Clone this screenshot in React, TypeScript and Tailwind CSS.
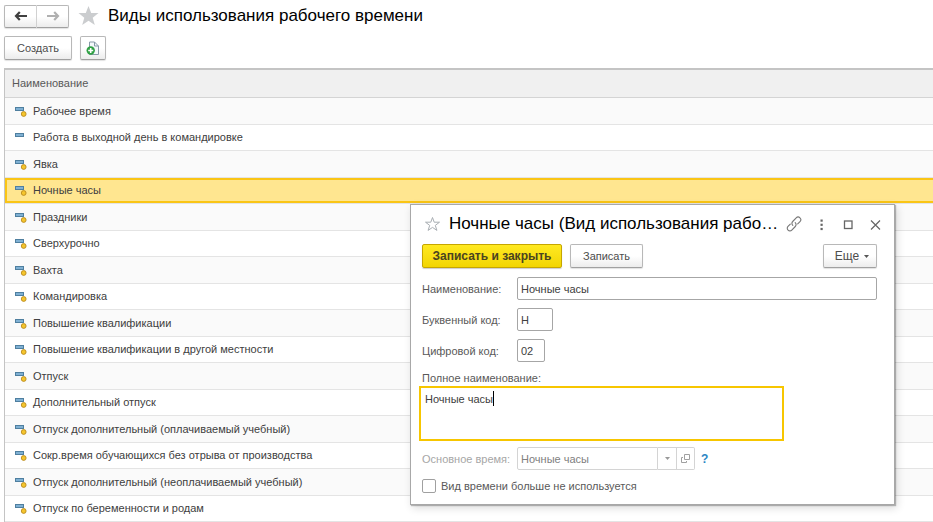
import { useState } from 'react'
import clsx from 'clsx'

const ROWS = [
  { name: 'Рабочее время', predefined: true },
  { name: 'Работа в выходной день в командировке', predefined: false },
  { name: 'Явка', predefined: true },
  { name: 'Ночные часы', predefined: true },
  { name: 'Праздники', predefined: true },
  { name: 'Сверхурочно', predefined: true },
  { name: 'Вахта', predefined: true },
  { name: 'Командировка', predefined: true },
  { name: 'Повышение квалификации', predefined: true },
  { name: 'Повышение квалификации в другой местности', predefined: true },
  { name: 'Отпуск', predefined: true },
  { name: 'Дополнительный отпуск', predefined: true },
  { name: 'Отпуск дополнительный (оплачиваемый учебный)', predefined: true },
  { name: 'Сокр.время обучающихся без отрыва от производства', predefined: true },
  { name: 'Отпуск дополнительный (неоплачиваемый учебный)', predefined: true },
  { name: 'Отпуск по беременности и родам', predefined: true },
]

const BTN = 'flex items-center justify-center rounded-xs border border-[#b8b8b8] border-b-[#a0a0a0] bg-linear-to-b from-white from-50% to-[#ececec] text-[#4d4d4d] shadow-[0_1px_1px_rgba(0,0,0,0.12)]'
const INPUT = 'h-[23px] rounded-xs border border-[#a6a6a6] bg-white px-[3px] text-[#404040] outline-none'
const LABEL = 'w-[95px] shrink-0 whitespace-nowrap'

function ItemIcon({ predefined }: { predefined: boolean }) {
  return (
    <svg width="13" height="12" viewBox="0 0 13 12" className="shrink-0" aria-hidden="true">
      <rect x="0.5" y="2.5" width="8" height="3" fill="#7fb0d3" stroke="#4f7f9f" />
      {predefined && <circle cx="8.7" cy="9" r="2.4" fill="#f5c52c" stroke="#b98a1c" strokeWidth="0.9" />}
    </svg>
  )
}

function Arrow({ flip, color }: { flip?: boolean; color: string }) {
  return (
    <svg width="14" height="12" viewBox="0 0 14 12" className={clsx(flip && '-scale-x-100')} aria-hidden="true">
      <path d="M3 6h10" stroke={color} strokeWidth="2" />
      <path d="M5.800 2L2 6l3.800 4" fill="none" stroke={color} strokeWidth="2.200" />
    </svg>
  )
}

function Dialog() {
  const [name, setName] = useState('Ночные часы')
  const [letter, setLetter] = useState('Н')
  const [digit, setDigit] = useState('02')
  const [full, setFull] = useState('Ночные часы')
  const [unused, setUnused] = useState(false)

  return (
    <section role="dialog" aria-labelledby="dlg-title" className="absolute top-[204px] left-[410px] w-[485px] border border-[#a8a8a8] bg-white pr-[17px] pb-[11px] pl-[11px] text-[#595959] shadow-[1px_1px_1px_rgba(0,0,0,0.25),2px_3px_8px_rgba(0,0,0,0.15)]">
      {/* Title bar */}
      <header className="flex h-[38px] items-center">
        <button aria-label="В избранное" className="ml-[2px]">
          <svg width="17" height="16" viewBox="0 0 17 16" fill="none" stroke="#a9aeb3" aria-hidden="true">
            <path d="M8.500 1.500l1.700 4.700h5.300l-4.200 3.200 1.600 5-4.400-3-4.400 3 1.600-5L1.500 6.200h5.300z" />
          </svg>
        </button>
        <h2 id="dlg-title" className="ml-2 min-w-0 flex-1 text-[17px] leading-6 whitespace-nowrap text-black">Ночные часы (Вид использования рабо…</h2>
        <div className="flex items-center gap-3">
          <button aria-label="Получить ссылку">
            <svg width="16" height="16" viewBox="0 0 16 16" fill="none" stroke="#777" strokeWidth="1.1" strokeLinecap="round" aria-hidden="true">
              <path d="M6.800 9.300a2.600 2.600 0 0 1-.1-3.800l3.500-3.600a2.600 2.600 0 0 1 3.800 3.700l-2.300 2.300" />
              <path d="M9.200 6.700a2.600 2.600 0 0 1 .1 3.800l-3.500 3.600A2.600 2.600 0 0 1 2 10.400l2.300-2.300" />
            </svg>
          </button>
          <button aria-label="Ещё действия">
            <svg width="15" height="15" viewBox="0 0 15 15" fill="#666" aria-hidden="true">
              <rect x="6.500" y="2.500" width="2.200" height="2.200" /><rect x="6.500" y="6.700" width="2.200" height="2.200" /><rect x="6.500" y="10.900" width="2.200" height="2.200" />
            </svg>
          </button>
          <button aria-label="Развернуть">
            <svg width="15" height="15" viewBox="0 0 15 15" fill="none" stroke="#666" strokeWidth="1.300" aria-hidden="true">
              <rect x="3.500" y="4" width="7.500" height="7.500" />
            </svg>
          </button>
          <button aria-label="Закрыть" className="-mr-[6px]">
            <svg width="15" height="15" viewBox="0 0 15 15" fill="none" stroke="#666" strokeWidth="1.200" aria-hidden="true">
              <path d="M3 3.500l9 9M12 3.500l-9 9" />
            </svg>
          </button>
        </div>
      </header>

      {/* Commands */}
      <div className="mt-px flex gap-2">
        <button className="h-6 w-[140px] rounded-xs border border-[#c6a600] bg-linear-to-b from-[#ffe920] to-[#f2d500] text-[12px] font-bold text-[#4a4420] shadow-[0_1px_1px_rgba(0,0,0,0.2)]">Записать и закрыть</button>
        <button className={clsx(BTN, 'h-6 w-[73px]')}>Записать</button>
        <button className={clsx(BTN, 'ml-auto h-6 w-[54px] gap-[5px] pl-1 text-[12px]')}>
          Еще
          <svg width="5" height="3" viewBox="0 0 5 3" fill="#555" aria-hidden="true"><path d="M0 0h5L2.500 3z" /></svg>
        </button>
      </div>

      {/* Fields */}
      <div className="mt-[9px] flex flex-col gap-2">
        <div className="flex items-center">
          <label htmlFor="name" className={LABEL}>Наименование:</label>
          <input id="name" value={name} onChange={e => setName(e.target.value)} className={clsx(INPUT, 'min-w-0 flex-1')} />
        </div>
        <div className="flex items-center">
          <label htmlFor="letter" className={LABEL}>Буквенный код:</label>
          <input id="letter" value={letter} onChange={e => setLetter(e.target.value)} className={clsx(INPUT, 'w-9')} />
        </div>
        <div className="flex items-center">
          <label htmlFor="digit" className={LABEL}>Цифровой код:</label>
          <input id="digit" value={digit} onChange={e => setDigit(e.target.value)} className={clsx(INPUT, 'w-7')} />
        </div>
      </div>
      <label htmlFor="full" className="mt-2 block leading-4">Полное наименование:</label>
      <div className="relative -ml-[3px] w-[365px]">
        <textarea id="full" value={full} onChange={e => setFull(e.target.value)} className="block h-[55px] w-full resize-none border-2 border-[#f7c600] bg-white px-1 py-[3px] leading-4 text-[#404040] caret-transparent outline-none" />
        {/* steady caret after the text */}
        <span aria-hidden="true" className="pointer-events-none absolute top-[5px] left-[6px] flex h-[15px] border-r border-black">
          <span className="invisible">{full}</span>
        </span>
      </div>
      <div className="mt-[6px] flex items-center">
        <label htmlFor="base" className={clsx(LABEL, 'text-[#a6a6a6]')}>Основное время:</label>
        <input id="base" value="Ночные часы" disabled className="h-[23px] w-[141px] rounded-l-xs border border-[#d4d4d4] px-[3px] text-[#808080]" />
        <button disabled aria-label="Выбрать из списка" className="flex h-[23px] w-[19px] items-center justify-center border-y border-r border-[#d4d4d4]">
          <svg width="5" height="3" viewBox="0 0 5 3" fill="#999" aria-hidden="true"><path d="M0 0h5L2.500 3z" /></svg>
        </button>
        <button disabled aria-label="Открыть" className="flex h-[23px] w-[18px] items-center justify-center rounded-r-xs border-y border-r border-[#d4d4d4]">
          <svg width="9" height="9" viewBox="0 0 9 9" fill="none" stroke="#a0a0a0" aria-hidden="true">
            <path d="M3.500 .5h5v5h-5zM2 3.500H.5v5h5V7" />
          </svg>
        </button>
        <button aria-label="Справка" className="ml-[6px] text-[12px] font-bold text-[#2d86c4]">?</button>
      </div>
      <label className="mt-[9px] flex h-[14px] items-center gap-[5px]">
        <input type="checkbox" checked={unused} onChange={e => setUnused(e.target.checked)} className="size-[14px] appearance-none rounded-xs border border-[#a0a0a0] bg-white checked:bg-[#f7c600]" />
        Вид времени больше не используется
      </label>
    </section>
  )
}

export default function App() {
  const [selected, setSelected] = useState(3)

  return (
    <main className="relative h-screen overflow-hidden bg-white pl-1 font-['Liberation_Sans',Arial,sans-serif] text-[11px] leading-4 text-[#404040]">
      {/* Title */}
      <header className="flex h-8 items-center">
        <div className="flex">
          <button aria-label="Назад" className={clsx(BTN, 'h-[23px] w-[33px] rounded-r-none border-r-[#d4d4d4]')}><Arrow color="#404040" /></button>
          <button aria-label="Вперед" className={clsx(BTN, 'h-[23px] w-8 rounded-l-none border-l-0')}><Arrow flip color="#b0b0b0" /></button>
        </div>
        <button aria-label="В избранное" className="ml-[9px]">
          <svg width="21" height="20" viewBox="0 0 21 20" fill="#cbcdcf" aria-hidden="true">
            <path d="M10.500 0l2.700 7.100h7.300l-5.800 4.600 2.100 7.300-6.300-4.300L4.200 19l2.100-7.300L.5 7.100h7.300z" />
          </svg>
        </button>
        <h1 className="ml-[9px] text-[17px] leading-6 text-black">Виды использования рабочего времени</h1>
      </header>

      {/* Toolbar */}
      <div className="mt-1 flex gap-2">
        <button className={clsx(BTN, 'h-6 w-[68px]')}>Создать</button>
        <button aria-label="Создать группу" className={clsx(BTN, 'h-6 w-[26px]')}>
          <svg width="14" height="15" viewBox="0 0 14 15" fill="none" aria-hidden="true">
            <path d="M3.500 1h5l4 4V13.500H3.500z" fill="#f4f8fb" stroke="#8799a8" />
            <path d="M8.500 1v4h4" stroke="#8799a8" />
            <circle cx="4.700" cy="9.500" r="4.200" fill="#2fa044" />
            <path d="M4.700 7v5M2.200 9.500h5" stroke="#fff" strokeWidth="1.600" />
          </svg>
        </button>
      </div>

      <div className="mt-2 border-t-2 border-l border-[#c4c4c4]">
        <table className="w-full border-collapse">
          <thead>
            <tr className="h-[27px] border-b border-[#d4d4d4] bg-[#f0f0f0]">
              <th scope="col" className="p-0 pl-[7px] text-left font-normal text-[#595959]">Наименование</th>
            </tr>
          </thead>
          <tbody>
            {ROWS.map((row, i) => (
              <tr key={row.name} onClick={() => setSelected(i)} className="h-[27px] border-b border-[#e4e4e4] odd:bg-[#fafafa] even:h-[26px]">
                <td className="p-0">
                  <div className={clsx('flex h-[25px] items-center gap-[5px]', i === selected ? 'border-2 border-r-0 border-[#fac515] bg-[#ffe690] pl-2' : 'pl-[10px]')}>
                    <ItemIcon predefined={row.predefined} />
                    {row.name}
                  </div>
                </td>
              </tr>
            ))}
          </tbody>
        </table>
      </div>

      <Dialog />
    </main>
  )
}
